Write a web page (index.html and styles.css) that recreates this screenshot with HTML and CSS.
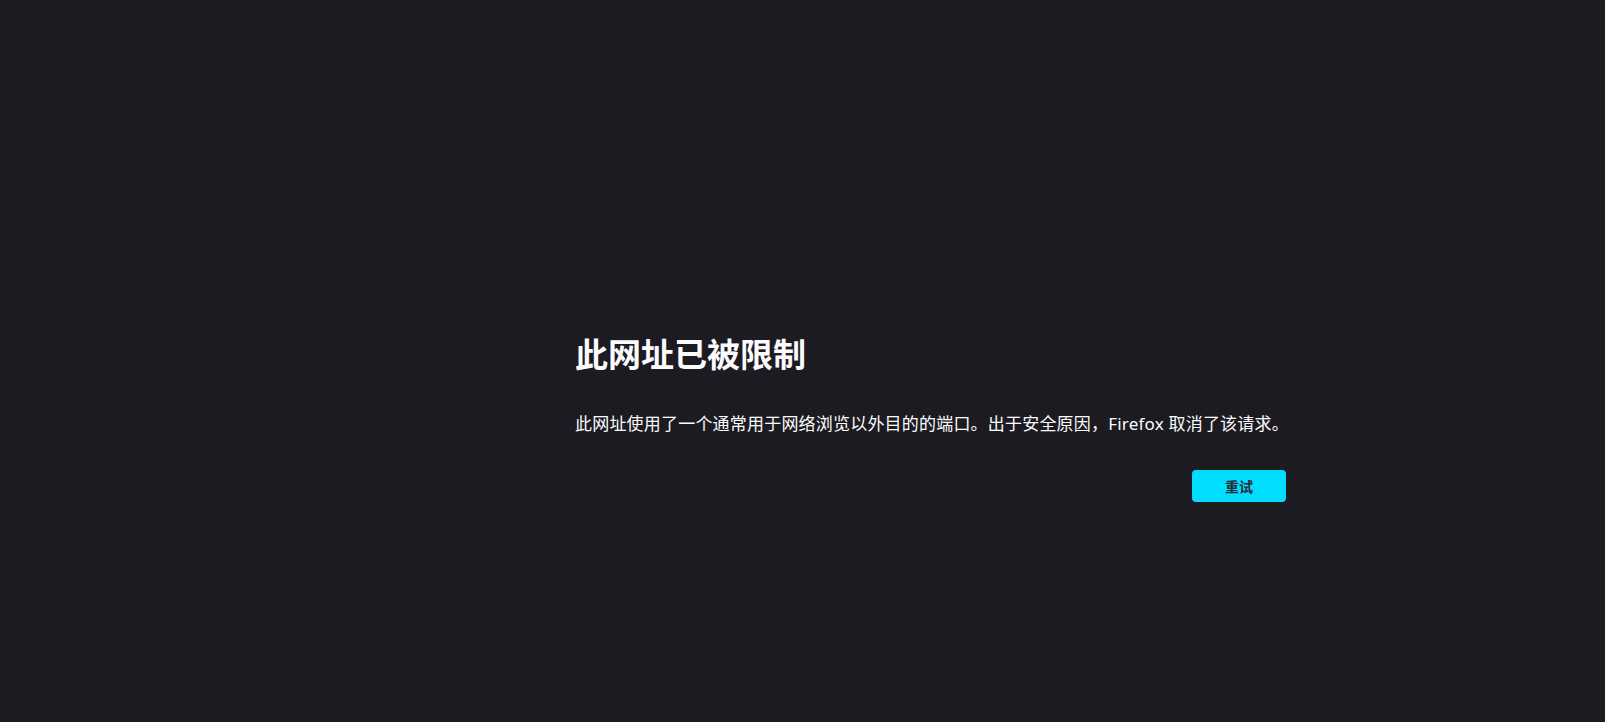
FILE: index.html
```html
<!DOCTYPE html>
<html lang="zh-CN">
<head>
<meta charset="utf-8">
<title>此网址已被限制</title>
<link rel="stylesheet" href="styles.css">
</head>
<body>
<main class="page">
  <div class="container">
    <h1 class="title">此网址已被限制</h1>
    <p class="desc">此网址使用了一个通常用于网络浏览以外目的的端口。出于安全原因，Firefox 取消了该请求。</p>
    <div class="actions">
      <button class="btn-primary">重试</button>
    </div>
  </div>
</main>
</body>
</html>
```
FILE: styles.css
```css
html, body {
  margin: 0;
  padding: 0;
  background: #1c1b22;
  height: 100%;
}
body {
  font-family: "Noto Sans", "Noto Sans CJK SC", sans-serif;
  color: #fbfbfe;
}
.page {
  display: flex;
  padding-top: 335px;
  padding-left: 575px;
}
.container {
  width: 711px;
  display: flex;
  flex-direction: column;
}
.title {
  margin: 0;
  font-size: 33px;
  line-height: 40px;
  font-weight: 700;
}
.desc {
  margin: 37px 0 0 0;
  font-size: 17px;
  line-height: 24px;
  letter-spacing: 0.2px;
  white-space: nowrap;
}
.actions {
  display: flex;
  justify-content: flex-end;
  margin-top: 34px;
}
.btn-primary {
  width: 94px;
  height: 32px;
  border: none;
  border-radius: 4px;
  background: #00ddff;
  color: #2b2a33;
  font-family: "Noto Sans CJK SC", sans-serif;
  font-size: 14px;
  font-weight: 700;
  padding: 0;
}
```
